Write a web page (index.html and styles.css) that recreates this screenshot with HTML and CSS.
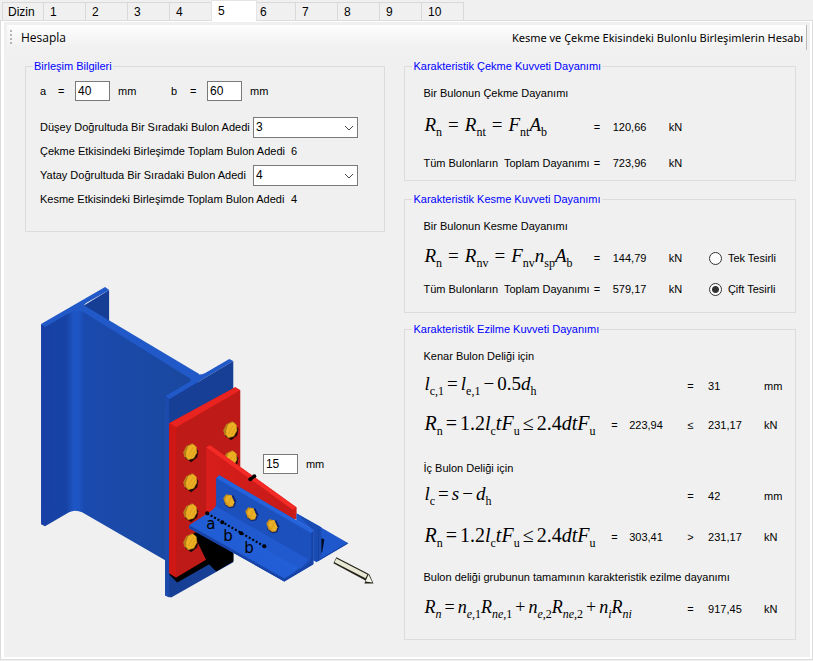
FILE: index.html
```html
<!doctype html>
<html lang="tr">
  <head>
    <meta charset="utf-8">
    <title>Bulonlu Birleşimlerin Hesabı</title>
    <link rel="stylesheet" href="styles.css">
  </head>
  <body>
    <nav class="tabs">
      <button class="tab">Dizin</button>
      <button class="tab">1</button>
      <button class="tab">2</button>
      <button class="tab">3</button>
      <button class="tab">4</button>
      <button class="tab active">5</button>
      <button class="tab">6</button>
      <button class="tab">7</button>
      <button class="tab">8</button>
      <button class="tab">9</button>
      <button class="tab">10</button>
    </nav>

    <main class="page">
      <div class="page-inner">
        <header class="toolbar">
          <span class="grip"></span>
          <button class="calc">Hesapla</button>
          <h1>Kesme ve Çekme Ekisindeki Bulonlu Birleşimlerin Hesabı</h1>
        </header>

        <div class="columns">
          <section class="left">
            <fieldset>
              <legend>Birleşim Bilgileri</legend>
              <div class="sizes">
                <label for="a">a</label><span>=</span><input id="a" type="text" value="40"><span>mm</span>
                <label for="b">b</label><span>=</span><input id="b" type="text" value="60"><span>mm</span>
              </div>
              <div class="row">
                <label for="dusey">Düşey Doğrultuda Bir Sıradaki Bulon Adedi</label>
                <span class="select-box">
                  <select id="dusey"><option>2</option><option selected>3</option><option>4</option></select>
                  <svg width="10" height="6" viewBox="0 0 10 6"><path d="M1 1l4 4 4-4" /></svg>
                </span>
              </div>
              <div class="row count"><span>Çekme Etkisindeki Birleşimde Toplam Bulon Adedi</span><output>6</output></div>
              <div class="row">
                <label for="yatay">Yatay Doğrultuda Bir Sıradaki Bulon Adedi</label>
                <span class="select-box">
                  <select id="yatay"><option>2</option><option>3</option><option selected>4</option></select>
                  <svg width="10" height="6" viewBox="0 0 10 6"><path d="M1 1l4 4 4-4" /></svg>
                </span>
              </div>
              <div class="row count"><span>Kesme Etkisindeki Birleşimde Toplam Bulon Adedi</span><output>4</output></div>
            </fieldset>

            <div class="drawing">
              <svg viewBox="25 280 360 330" role="img" aria-label="Birleşim">
                <defs>
                  <linearGradient id="web" gradientUnits="userSpaceOnUse" x1="41" y1="0" x2="190" y2="0">
                    <stop offset="0" stop-color="#1840a4" />
                    <stop offset=".17" stop-color="#1743a6" />
                    <stop offset=".22" stop-color="#1e55c4" />
                    <stop offset=".25" stop-color="#1e55c4" />
                    <stop offset=".29" stop-color="#1a4aae" />
                    <stop offset="1" stop-color="#1a489f" />
                  </linearGradient>
                  <linearGradient id="gusset" gradientUnits="userSpaceOnUse" x1="206" y1="0" x2="296" y2="0">
                    <stop offset="0" stop-color="#d81e1a" />
                    <stop offset="1" stop-color="#c41a18" />
                  </linearGradient>
                  <linearGradient id="leg" gradientUnits="userSpaceOnUse" x1="262" y1="530" x2="240" y2="568">
                    <stop offset="0" stop-color="#1c4cb0" />
                    <stop offset=".3" stop-color="#2260d8" />
                    <stop offset="1" stop-color="#205ad0" />
                  </linearGradient>
                  <g id="bolt">
                    <path d="M-4 -5L4 -7 8 -1 7 5 1 10 -5 6z" fill="#240a04" />
                    <path d="M-7 0L-4 -6 2 -9 6 -6 7 0 4 6 -2 8 -6 4z" fill="#b5801a" />
                    <path d="M-4 0L-2 -6 3 -8 6 -5 6 1 3 6 -2 7 -4 4z" fill="#eeb022" />
                    <path d="M-2 4L3 -5M1 5L5 -2" stroke="#dca022" fill="none" />
                  </g>
                  <g id="bolt-small">
                    <path d="M-3 -4L4 -6 7 0 5 6 0 7 -5 3z" fill="#10226a" />
                    <path d="M-6 -3L-3 -7 2 -6 5 1 4 5 0 6 -4 3z" fill="#c58c1c" />
                    <path d="M-3 -5L2 -6 5 1 3 5 -1 4 -4 -1z" fill="#eab026" />
                    <path d="M-1 3L2 -4" stroke="#d89c20" fill="none" />
                  </g>
                </defs>

                <!-- column -->
                <path d="M83 306L109 290V326L88 313Q83 310 83 306z" fill="#163e94" />
                <path d="M72 308L85 306 199 374 196 390 165 404z" fill="#2159c8" />
                <path d="M41 324L45 326 68 313Q74 309 82 311L191 379V384L165 399V560L82 512Q75 509 69 512L45 526 41 524z" fill="url(#web)" />
                <path d="M41 324L105 287 109 290 86 303Q82 306 85 309L193 373Q199 376 205 373L229 359 233 361 169 399 165 396 187 383Q192 381 190 378L84 312Q76 309 69 313L45 327z" fill="#2159c8" />
                <path d="M169 399L233 361V562L171 597 165 595V396z" fill="#173f96" />
                <path d="M165 396L169 399V597L165 595z" fill="#1b49ac" />

                <!-- shadow under the end plate -->
                <path d="M169 574L208 550 197 533 233 546V561L216 571 209 564 177 582z" fill="#000" />

                <!-- end plate -->
                <path d="M169 423L235 387 240 390V540L205 560 176 577 169 573z" fill="#be1a18" />
                <path d="M169 423L235 387 240 390 176 427z" fill="#e92420" />
                <path d="M169 423L176 427V577L169 573z" fill="#cf1814" />
                <path d="M193 533L200 531 233 545V561L216 571 207 562z" fill="#000" />
                <use href="#bolt" x="190" y="452" />
                <use href="#bolt" x="190" y="482" />
                <use href="#bolt" x="190" y="512" />
                <use href="#bolt" x="190" y="542" />
                <use href="#bolt" x="230" y="430" />
                <use href="#bolt" x="230" y="459" />

                <!-- gusset plate -->
                <path d="M206 447L210 445 296 507V519L250 515 206 514z" fill="url(#gusset)" />
                <path d="M206 447L210 445 296 507 293 510z" fill="#f32a26" />
                <path d="M293 509L296 507V519L293 518z" fill="#d01c18" />

                <!-- rear angle -->
                <path d="M296 513L348 543 316 562 313 560V530L296 520z" fill="#1f58cc" />
                <path d="M296 513L321 527V556L317 561 313 560V530z" fill="#1a4cb4" />
                <path d="M321 538L324 539 322 551 321 553z" fill="#020a24" />
                <path d="M318 529V560L347 543" fill="none" stroke="#1742a0" />

                <!-- front angle -->
                <path d="M189 525L216 509V478L219 475 313 530V564L284 581 189 528z" fill="#1c50bc" />
                <path d="M189 525L212 510Q216 507 216 502L308 558 284 581 189 527z" fill="url(#leg)" />
                <path d="M216 478L311 532V556L306 562 216 511z" fill="#1c50bc" />
                <path d="M216 506L308 559 300 569 206 515z" fill="#205ace" />
                <path d="M216 478L219 475 313 530 311 533z" fill="#2563dc" />
                <path d="M189 525L284 578 304 566Q311 562 311 555V533L313 531V564L284 581 189 528z" fill="#1844a8" />
                <use href="#bolt-small" x="229" y="501" />
                <use href="#bolt-small" x="251" y="514" />
                <use href="#bolt-small" x="272" y="526" />

                <!-- spacing marks -->
                <path d="M207 513L264 546" stroke="#000" stroke-width="2" stroke-dasharray="2 2" />
                <circle cx="207" cy="513" r="2" /><circle cx="222" cy="522" r="2" />
                <circle cx="241" cy="533" r="2" /><circle cx="264" cy="546" r="2" />
                <text x="206" y="529">a</text>
                <text x="223" y="541">b</text>
                <text x="244" y="553">b</text>
                <path d="M250 479L254 476" stroke="#000" stroke-width="3" />
                <circle cx="250" cy="479" r="2" /><circle cx="254" cy="476" r="2" />

                <!-- force arrow -->
                <path d="M336 557L367 573 369 574 373 583 364 583 365 580 333 563z" fill="#222218" />
                <path d="M335 560L366 576" stroke="#e8e8d4" stroke-width="4" />
                <path d="M368 574L372 582 365 581z" fill="#f4f4e8" />
              </svg>
              <div class="thickness">
                <input type="text" value="15" aria-label="Kalınlık"><span>mm</span>
              </div>
            </div>
          </section>

          <section class="right">
            <fieldset class="tension">
              <legend>Karakteristik Çekme Kuvveti Dayanımı</legend>
              <p class="caption">Bir Bulonun Çekme Dayanımı</p>
              <span class="formula"><i>R</i><sub>n</sub><b>=</b><i>R</i><sub>nt</sub><b>=</b><i>F</i><sub>nt</sub><i>A</i><sub>b</sub></span>
              <span>=</span><output>120,66</output><span>kN</span>
              <span class="text">Tüm Bulonların&nbsp; Toplam Dayanımı</span>
              <span>=</span><output>723,96</output><span>kN</span>
            </fieldset>

            <fieldset class="shear">
              <legend>Karakteristik Kesme Kuvveti Dayanımı</legend>
              <p class="caption">Bir Bulonun Kesme Dayanımı</p>
              <span class="formula"><i>R</i><sub>n</sub><b>=</b><i>R</i><sub>nv</sub><b>=</b><i>F</i><sub>nv</sub><i>n</i><sub>sp</sub><i>A</i><sub>b</sub></span>
              <span>=</span><output>144,79</output><span>kN</span>
              <label><input type="radio" name="tesir">Tek Tesirli</label>
              <span class="text">Tüm Bulonların&nbsp; Toplam Dayanımı</span>
              <span>=</span><output>579,17</output><span>kN</span>
              <label><input type="radio" name="tesir" checked>Çift Tesirli</label>
            </fieldset>

            <fieldset class="bearing">
              <legend>Karakteristik Ezilme Kuvveti Dayanımı</legend>
              <p class="caption">Kenar Bulon Deliği için</p>
              <span class="formula wide tight"><i>l</i><sub>c,1</sub><b>=</b><i>l</i><sub>e,1</sub><b>−</b>0.5<i>d</i><sub>h</sub></span>
              <span>=</span><output>31</output><span>mm</span>
              <span class="formula tight large"><i>R</i><sub>n</sub><b>=</b>1.2<i>l</i><sub>c</sub><i>tF</i><sub>u</sub><b>≤</b>2.4<i>dtF</i><sub>u</sub></span>
              <span>=</span><output>223,94</output><span>≤</span><output>231,17</output><span>kN</span>
              <p class="caption">İç Bulon Deliği için</p>
              <span class="formula wide tight"><i>l</i><sub>c</sub><b>=</b><i>s</i><b>−</b><i>d</i><sub>h</sub></span>
              <span>=</span><output>42</output><span>mm</span>
              <span class="formula tight large"><i>R</i><sub>n</sub><b>=</b>1.2<i>l</i><sub>c</sub><i>tF</i><sub>u</sub><b>≤</b>2.4<i>dtF</i><sub>u</sub></span>
              <span>=</span><output>303,41</output><span>&gt;</span><output>231,17</output><span>kN</span>
              <p class="caption">Bulon deliği grubunun tamamının karakteristik ezilme dayanımı</p>
              <span class="formula wide tight small"><i>R</i><sub><i>n</i></sub><b>=</b><i>n</i><sub><i>e</i>,1</sub><i>R</i><sub><i>ne</i>,1</sub><b>+</b><i>n</i><sub><i>e</i>,2</sub><i>R</i><sub><i>ne</i>,2</sub><b>+</b><i>n</i><sub><i>i</i></sub><i>R</i><sub><i>ni</i></sub></span>
              <span>=</span><output>917,45</output><span>kN</span>
            </fieldset>
          </section>
        </div>
      </div>
    </main>
  </body>
</html>
```
FILE: styles.css
```css
* {
  box-sizing: border-box;
}

body {
  margin: 0;
  min-height: 100vh;
  display: flex;
  flex-direction: column;
  background: #f0f0f0;
  color: #000;
  font: 11px/14px "Liberation Sans", Arial, sans-serif;
}

button, input, select {
  font: inherit;
  color: inherit;
}

p, h1 {
  margin: 0;
}

/* tabs */
.tabs {
  display: flex;
  align-items: flex-end;
  height: 20px;
  padding-left: 2px;
}

.tab {
  width: 42px;
  height: 18px;
  padding: 0 6px;
  border: 1px solid #d9d9d9;
  border-width: 1px 1px 0 0;
  background: #f0f0f0;
  text-align: left;
  font-size: 12px;
}

.tab:first-child {
  border-left-width: 1px;
  padding: 0 5px;
}

.tab.active {
  position: relative;
  width: 46px;
  height: 21px;
  margin: 0 -3px -1px -1px;
  border: 1px solid #e4e4e4;
  border-bottom: 0;
  background: #fff;
}

/* page */
.page {
  flex: 1;
  display: flex;
  flex-direction: column;
  margin-bottom: 1px;
  padding: 1px 2px 2px 3px;
  border: 1px solid #dcdcdc;
  background: #fff;
}

.page-inner {
  flex: 1;
  padding: 3px 3px 10px;
  background: #f0f0f0;
}

.toolbar {
  display: flex;
  align-items: center;
  height: 25px;
  padding: 0 3px;
  border-right: 1px solid #b8b8b8;
  background: linear-gradient(#fdfdfd, #f0f0f0);
}

.grip {
  width: 2px;
  height: 15px;
  background: repeating-linear-gradient(#b4b4b4 0 2px, transparent 2px 4px);
}

.calc {
  margin-right: auto;
  padding: 0 9px;
  border: 0;
  background: none;
  font: 12px/16px "Open Sans", sans-serif;
}

.toolbar h1 {
  font: 11px/16px "Noto Sans", sans-serif;
}

.columns {
  display: grid;
  grid-template-columns: 360fr 391fr;
  gap: 19px;
  padding: 9px 11px 0 18px;
}

fieldset {
  margin: 0;
  padding: 8px 14px 0;
  border: 1px solid #dcdcdc;
}

legend {
  padding: 0 1px;
  margin-left: -7px;
  color: #0000ff;
}

/* inputs */
input[type="text"] {
  width: 35px;
  height: 20px;
  padding: 0 2px;
  border: 1px solid #7a7a7a;
  background: #fff;
  font-size: 12px;
}

.left fieldset {
  padding-bottom: 20px;
}

.sizes {
  display: grid;
  grid-template-columns: 18px 17px 43px 53px 19px 17px 43px 1fr;
  align-items: center;
  margin-bottom: 14px;
}

.row {
  display: grid;
  grid-template-columns: 213px 105px;
  align-items: center;
  height: 24px;
  white-space: nowrap;
}

.row.count {
  grid-template-columns: 251px 1fr;
}

.select-box {
  position: relative;
}

.select-box select {
  display: block;
  width: 100%;
  height: 21px;
  padding: 0 2px;
  appearance: none;
  border: 1px solid #7a7a7a;
  border-radius: 0;
  background: #fff;
  font-size: 12px;
}

.select-box svg {
  position: absolute;
  top: 8px;
  right: 4px;
  fill: none;
  stroke: #444;
  pointer-events: none;
}

/* drawing */
.drawing {
  position: relative;
  margin-top: 48px;
}

.drawing svg {
  display: block;
  width: 100%;
}

.drawing text {
  font: 15px "DejaVu Sans", sans-serif;
}

.thickness {
  position: absolute;
  left: 66%;
  top: 174px;
  display: flex;
  align-items: center;
  gap: 8px;
}

/* results */
.right fieldset {
  display: grid;
  align-items: center;
  margin-bottom: 11px;
  padding: 8px 0 2px 18px;
}

.right legend {
  margin-left: -11px;
}

.tension, .shear {
  grid-template-columns: 170fr 19fr 56fr 40fr 86fr;
}

.tension {
  grid-template-rows: 24px 43px 30px;
}

.shear {
  grid-template-rows: 24px 40px 22px;
}

.right .shear {
  margin-bottom: 9px;
  padding-bottom: 12px;
}

.tension > :nth-child(3), .tension > .text {
  grid-column-start: 1;
}

.bearing {
  grid-template-columns: 188fr 18fr 58fr 21fr 56fr 31fr;
  grid-template-rows: 24px 36px 42px 34px 32px 50px 27px 40px;
}

.right .bearing {
  margin-bottom: 0;
  padding-bottom: 10px;
}

.caption {
  grid-column: 1 / -1;
  align-self: end;
  padding-bottom: 5px;
}

.text {
  white-space: nowrap;
}

label input[type="radio"] {
  appearance: none;
  width: 13px;
  height: 13px;
  margin: 0 6px 0 0;
  border: 1px solid #333;
  border-radius: 50%;
  background: #fff;
}

label input[type="radio"]:checked {
  background: radial-gradient(#333 0 3px, #fff 4px);
}

.shear label {
  display: flex;
  align-items: center;
  white-space: nowrap;
}

/* formulas */
.formula {
  padding: 0 0 4px 1px;
  font: 19px/24px "Liberation Serif", "Times New Roman", serif;
  white-space: nowrap;
}

.formula.large {
  font-size: 20px;
}

.formula.small {
  font-size: 18px;
}

.formula.wide {
  grid-column: span 3;
}

.formula b {
  margin: 0 6px;
  font-weight: normal;
}

.formula.tight b {
  margin: 0 3px;
}

.formula sub {
  font-size: 12px;
  line-height: 0;
  vertical-align: -5px;
}
```
